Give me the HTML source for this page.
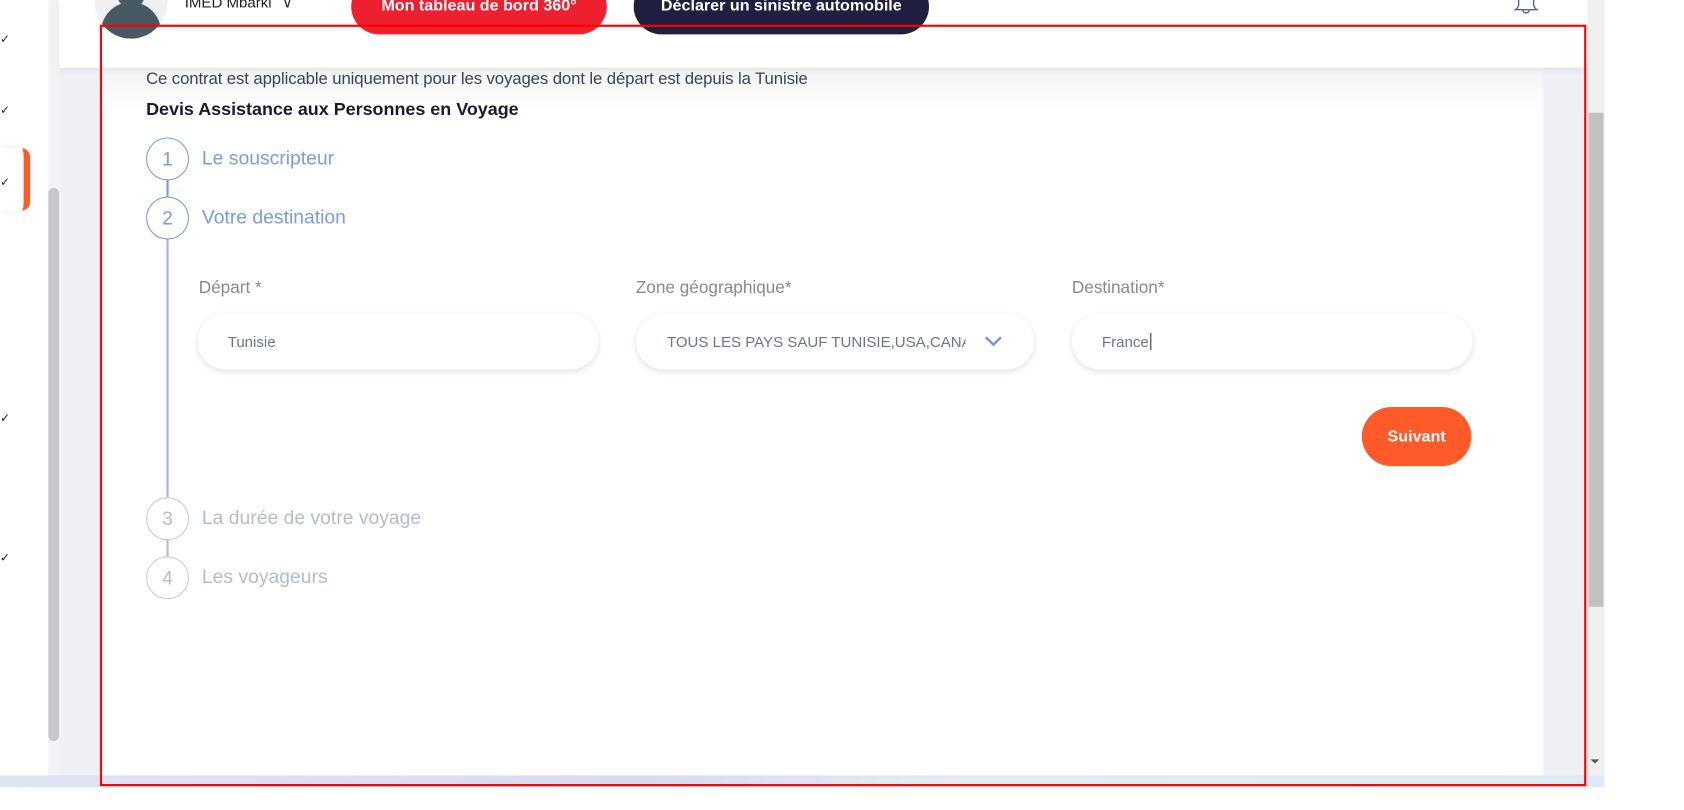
<!DOCTYPE html>
<html><head><meta charset="utf-8"><style>
html,body{margin:0;padding:0;width:1684px;height:810px;overflow:hidden;background:#fff;font-family:"Liberation Sans",sans-serif}
#w{position:absolute;left:0;top:0;width:1560px;height:750px;transform:scale(1.074);transform-origin:0 0}
.a{position:absolute}
.chk{position:absolute;left:0;font-size:11px;color:#222}
.circ{position:absolute;width:38px;height:38px;border-radius:50%;border:1.5px solid #7b9be0;background:#fff;color:#7b9be0;font-size:18px;text-align:center;line-height:38px;box-sizing:content-box}
.circ.g{border-color:#c6ccd6;color:#b4bcc8}
.st{position:absolute;font-size:18px;color:#7b9be0}
.st.g{color:#b4bcc8}
.lbl{position:absolute;top:260px;font-size:16px;color:#8a8a8a}
.inp{position:absolute;top:292px;height:52px;width:373px;border-radius:26px;background:#fff;box-shadow:0 2px 6px rgba(0,0,0,.12);font-size:14px;color:#6c7590;line-height:52px;box-sizing:border-box;padding-left:28px}
</style></head><body><div id="w">
<div class="a" style="left:0;top:0;width:45px;height:750px;background:#fff"></div>
<div class="a" style="left:0;top:138px;width:22px;height:58px;background:#fff;border-right:6px solid #ff5a29;border-radius:0 8px 8px 0;box-shadow:0 0 8px rgba(0,0,0,.08)"></div>
<div class="chk" style="top:30px">✓</div><div class="chk" style="top:96px">✓</div><div class="chk" style="top:163px">✓</div><div class="chk" style="top:383px">✓</div><div class="chk" style="top:513px">✓</div>
<div class="a" style="left:45px;top:0;width:10px;height:722px;background:#f2f2f2"></div>
<div class="a" style="left:45px;top:175px;width:10px;height:515px;background:#c8c8c8;border-radius:5px"></div>
<div class="a" style="left:55px;top:0;width:1423px;height:722px;background:#efeff6"></div>
<div class="a" style="left:93px;top:63px;width:1344px;height:659px;background:#fff"></div>
<div class="a" style="left:93px;top:63px;width:1344px;height:40px;background:linear-gradient(#f3f3f3,#fff)"></div>
<div class="a" style="left:55px;top:0;width:1423px;height:63px;background:#fff;box-shadow:0 3px 6px rgba(0,0,0,.05)"></div>
<div class="a" style="left:88px;top:-34px;width:68px;height:70px;border-radius:50%;background:#eef0f2;overflow:hidden"><div class="a" style="left:20px;top:8px;width:28px;height:34px;border-radius:50%;background:#475a63"></div><div class="a" style="left:6px;top:36px;width:56px;height:40px;border-radius:28px 28px 0 0;background:#475a63"></div></div>
<div class="a" style="left:172px;top:-6px;font-size:14px;color:#222">IMED Mbarki <span style="font-size:13px;margin-left:6px">∨</span></div>
<div class="a" style="left:327px;top:-20px;width:238px;height:52px;border-radius:26px;background:#ee1f2f;color:#fff;font-weight:bold;font-size:15px;text-align:center;line-height:38px;overflow:hidden"><span style="position:relative;top:7px">Mon tableau de bord 360°</span></div>
<div class="a" style="left:590px;top:-20px;width:275px;height:52px;border-radius:26px;background:#1f2040;color:#fff;font-weight:bold;font-size:15px;text-align:center;line-height:38px;overflow:hidden"><span style="position:relative;top:7px">Déclarer un sinistre automobile</span></div>
<svg class="a" style="left:1406px;top:-6px" width="30" height="22" viewBox="0 0 30 22"><path d="M8 0v10q0 3-3 5h20q-3-2-3-5V0" fill="none" stroke="#5a6680" stroke-width="1.3"/><path d="M12 15a3 3 0 0 0 6 0" fill="none" stroke="#5a6680" stroke-width="1.3"/></svg>
<div class="a" style="left:136px;top:65px;font-size:15.6px;color:#3c4257;letter-spacing:-0.1px">Ce contrat est applicable uniquement pour les voyages dont le départ est depuis la Tunisie</div>
<div class="a" style="left:136px;top:92px;font-size:16.7px;font-weight:bold;color:#1a1a2e">Devis Assistance aux Personnes en Voyage</div>
<div class="a" style="left:155px;top:166px;width:2px;height:20px;background:#7b9be0"></div>
<div class="a" style="left:155px;top:222px;width:2px;height:243px;background:#9fb5e6"></div>
<div class="a" style="left:155px;top:501px;width:2px;height:20px;background:#b4bcd0"></div>
<div class="circ" style="left:136px;top:128px">1</div><div class="st" style="left:188px;top:137px">Le souscripteur</div>
<div class="circ" style="left:136px;top:183px">2</div><div class="st" style="left:188px;top:192px">Votre destination</div>
<div class="circ g" style="left:136px;top:463px">3</div><div class="st g" style="left:188px;top:472px">La durée de votre voyage</div>
<div class="circ g" style="left:136px;top:518px">4</div><div class="st g" style="left:188px;top:527px">Les voyageurs</div>
<div class="lbl" style="left:185px">Départ *</div>
<div class="lbl" style="left:592px">Zone géographique*</div>
<div class="lbl" style="left:998px">Destination*</div>
<div class="inp" style="left:184px">Tunisie</div>
<div class="inp" style="left:592px;width:371px;padding-left:29px"><span style="display:inline-block;width:278px;overflow:hidden;white-space:nowrap;vertical-align:top">TOUS LES PAYS SAUF TUNISIE,USA,CANADA</span><svg style="position:absolute;left:324px;top:20px" width="18" height="12" viewBox="0 0 18 12"><path d="M2 2l7 7 7-7" fill="none" stroke="#6f93dd" stroke-width="2.2"/></svg></div>
<div class="inp" style="left:998px">France<span style="border-left:1px solid #333;margin-left:1px"></span></div>
<div class="a" style="left:1268px;top:379px;width:102px;height:55px;border-radius:28px;background:#ff5a29;color:#fff;font-weight:bold;font-size:15px;text-align:center;line-height:55px">Suivant</div>
<div class="a" style="left:1478px;top:0;width:16px;height:722px;background:#f0f0f0"></div>
<div class="a" style="left:1479px;top:105px;width:14px;height:460px;background:#c1c1c1"></div>
<div class="a" style="left:1481px;top:707px;width:0;height:0;border-left:4px solid transparent;border-right:4px solid transparent;border-top:4px solid #555"></div>
<div class="a" style="left:0;top:722px;width:1494px;height:11px;background:linear-gradient(90deg,#dfe3f2,#d6dbef 40%,#e2ecf7 60%,#dde9f6)"></div>
<div class="a" style="left:93px;top:23px;width:1380px;height:705px;border:2px solid #f00"></div>
</div></body></html>
